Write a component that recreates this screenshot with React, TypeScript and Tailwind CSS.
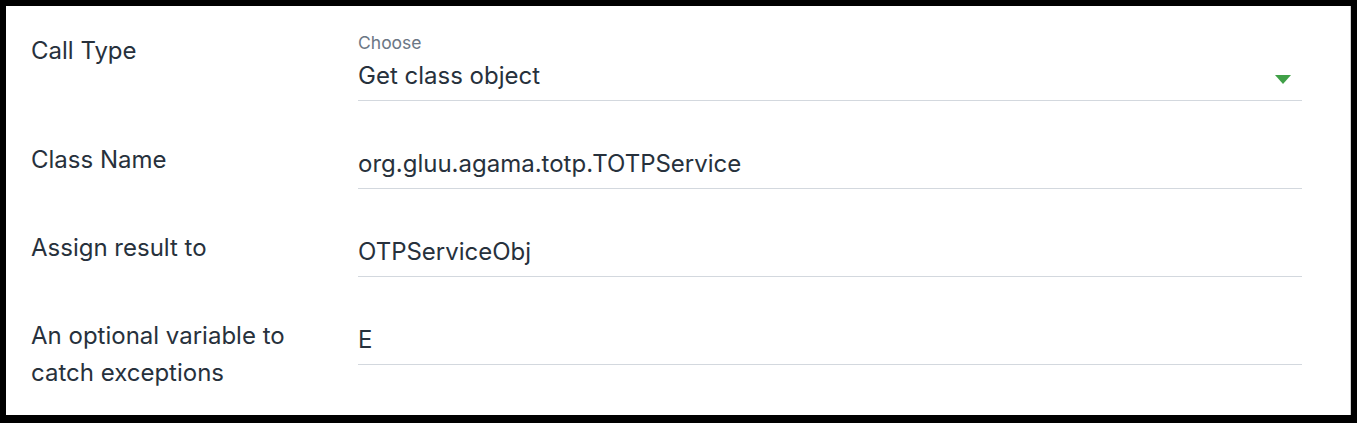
const font = { fontFamily: 'Inter, "Noto Sans", sans-serif' }

type Row = {
  label: string[]
  value: string
  select?: boolean
}

const rows: Row[] = [
  { label: ['Call Type'], value: 'Get class object', select: true },
  { label: ['Class Name'], value: 'org.gluu.agama.totp.TOTPService' },
  { label: ['Assign result to'], value: 'OTPServiceObj' },
  { label: ['An optional variable to', 'catch exceptions'], value: 'E' },
]

function Field({ row }: { row: Row }) {
  return (
    <div className="flex-1">
      <div className="flex h-[20px] items-center text-[17.5px] leading-none text-[#6b7785]">
        {row.select ? 'Choose' : ''}
      </div>
      <div className="flex h-[48px] items-center justify-between border-b border-[#d3d8de] pb-px">
        <span className="text-[24px] leading-none text-[#27313c]">{row.value}</span>
        {row.select && (
          <svg width="16" height="9" viewBox="0 0 16 9" className="mr-[11px] mt-[7px]">
            <path d="M0 0 H16 L8 9 Z" fill="#40a047" />
          </svg>
        )}
      </div>
    </div>
  )
}

export default function App() {
  return (
    <div className="min-h-[423px] w-full bg-black pt-[6px] pr-[6px] pb-[8px] pl-[6px]" style={font}>
      <div className="flex flex-col gap-[20px] border-r border-[#cfcfcf] bg-white pt-[27px] pr-[48px] pb-[24px] pl-[25px]">
        {rows.map((row, i) => (
          <div key={i} className="flex items-start">
            <div
              className={
                'w-[327px] text-[24px] leading-[37px] text-[#27313c] ' + (i === 0 ? '-mt-px' : 'mt-[20px]')
              }
            >
              {row.label.map((l) => (
                <div key={l}>{l}</div>
              ))}
            </div>
            <Field row={row} />
          </div>
        ))}
      </div>
    </div>
  )
}
